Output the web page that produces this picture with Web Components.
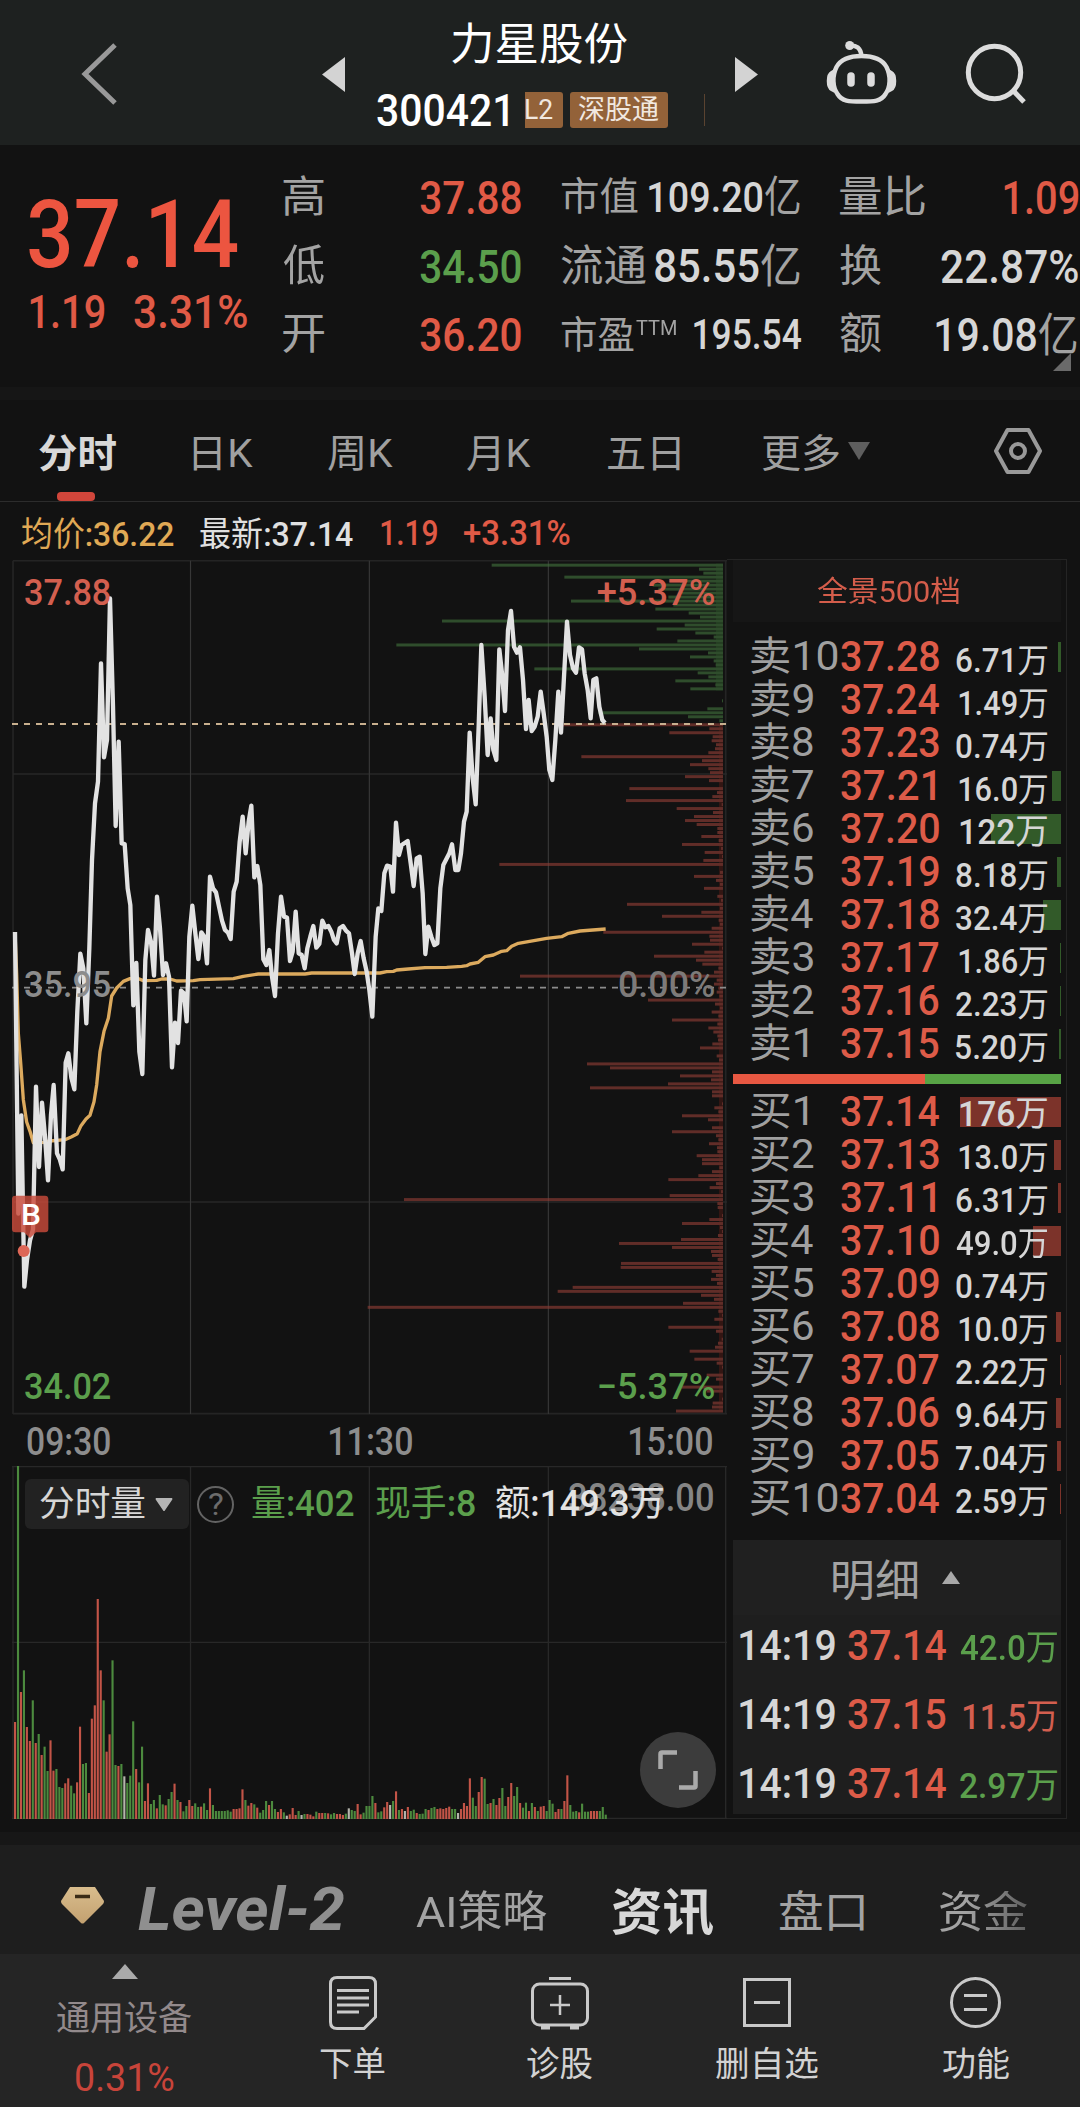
<!DOCTYPE html>
<html lang="zh-CN">
<head>
<meta charset="utf-8">
<title>力星股份 300421</title>
<style>
  body {
    margin: 0;
    width: 1080px;
    height: 2107px;
    overflow: hidden;
    background: #121212;
    color: #d6d6d6;
    font-family: Roboto, "Noto Sans CJK SC", sans-serif;
    --red: #e05a46;
    --green: #5b9f4c;
    --grey: #a3a3a3;
  }
</style>
</head>
<body>
<stock-page></stock-page>

<script>
// text squeezed or stretched to an exact drawn width: <fit-text w="98" s="41" x="10">
// w = drawn width, s = font size, x = space before it
const ruler = document.createElement('canvas').getContext('2d');

class FitText extends HTMLElement {
  constructor() {
    super();
    this.attachShadow({ mode: 'open' });
  }

  connectedCallback() {
    const size = this.getAttribute('s') || 34;
    const width = Number(this.getAttribute('w'));
    this.shadowRoot.innerHTML = `
      <style>
        :host {
          display: block;
          flex: none;
          width: ${width}px;
          height: ${size}px;
          margin-left: ${this.getAttribute('x') || 0}px;
          font-size: ${size}px;
          line-height: ${size}px;
          white-space: nowrap;
        }
        div {
          width: max-content;
          transform-origin: 0 50%;
        }
      </style>
      <div><slot></slot></div>
    `;
    const cs = getComputedStyle(this);
    // medium digits sit next to regular hanzi
    const runs = this.textContent.match(/[\u4e00-\u9fff]+|[^\u4e00-\u9fff]+/g);
    const weightOf = (run) => (cs.fontWeight === '500' && run >= '\u4e00' ? '400' : cs.fontWeight);
    const sizes = runs.map((run) => {
      ruler.font = `${cs.fontStyle} ${weightOf(run)} ${size}px ${cs.fontFamily}`;
      return ruler.measureText(run);
    });
    if (cs.fontWeight === '500') {
      this.innerHTML = runs.map((run) => (weightOf(run) === '400' ? `<span style="font-weight:400">${run}</span>` : run)).join('');
    }
    const last = sizes.pop();
    const left = (sizes[0] || last).actualBoundingBoxLeft;
    const ink = sizes.reduce((sum, m) => sum + m.width, left + last.actualBoundingBoxRight);
    const k = width / ink;
    this.shadowRoot.querySelector('div').style.transform = `translateX(${left * k}px) scaleX(${k})`;
  }
}

class StockHeader extends HTMLElement {
  constructor() {
    super();
    this.attachShadow({ mode: 'open' });
  }

  connectedCallback() {
    this.shadowRoot.innerHTML = `
      <style>
        :host {
          display: flex;
          align-items: center;
          height: 145px;
          background: #1e2120;
          color: #fff;
        }
        svg { flex: none; display: block; overflow: visible; }
        .back { margin: 3px 206px 0 82px; }
        .tri { margin-top: 3px; }
        .center { width: 390px; height: 145px; }
        .name { display: flex; height: 44px; padding-top: 23px; }
        .code { display: flex; align-items: center; height: 36px; margin-top: 25px; font-weight: 500; }
        .num { margin-top: 2px; }
        .tag {
          display: flex;
          align-items: center;
          height: 36px;
          background: #936239;
          border-radius: 3px;
          color: #f1e8e0;
          font-weight: 400;
        }
        .tag fit-text { margin-top: 1px; }
        .l2 { width: 38px; margin-left: 17px; border-radius: 0 3px 3px 0; }
        .connect { width: 98px; margin-left: 7px; }
        .line { width: 1px; height: 32px; margin-left: 36px; background: #5a4330; }
        .bot { margin: 0 0 0 68px; }
        .search { margin: 2px 0 0 70px; }
      </style>
      <svg class="back" width="34" height="62"><path d="M33 2L3 31L33 60" fill="none" stroke="#999" stroke-width="5"/></svg>
      <svg class="tri" width="23" height="35"><path d="M23 0V35L0 17.5Z" fill="#d3d3d3"/></svg>
      <div class="center">
        <div class="name"><fit-text x="107" w="175" s="44">力星股份</fit-text></div>
        <div class="code">
          <fit-text class="num" x="32" w="131" s="44">300421</fit-text>
          <div class="tag l2"><fit-text x="1" w="27" s="27">L2</fit-text></div>
          <div class="tag connect"><fit-text x="9" w="80" s="27">深股通</fit-text></div>
          <div class="line"></div>
        </div>
      </div>
      <svg class="tri" width="23" height="35"><path d="M0 0V35L23 17.5Z" fill="#d3d3d3"/></svg>
      <svg class="bot" width="70" height="64" fill="none" stroke="#dcdcdc" stroke-width="4.5">
        <path d="M35.5 15C47 15 56 18 60.500 26C65 35 64.500 46 59.500 53C55 60.500 48 60.500 35.500 60.500C23 60.500 16 60.500 11.500 53C6.500 46 6 35 10.500 26C15 18 24 15 35.500 15Z"/>
        <path d="M24 4.500C30 4 35 7 35.300 15"/>
        <circle cx="23.700" cy="4.500" r="4.500" fill="#dcdcdc" stroke="none"/>
        <path d="M6 32C2 34 2 46 6 48Z M65 32C69 34 69 46 65 48Z" fill="#dcdcdc"/>
        <path d="M25 35V42M45 35V42" stroke-width="7.500" stroke-linecap="round"/>
      </svg>
      <svg class="search" width="60" height="60" fill="none" stroke="#dcdcdc" stroke-width="5">
        <circle cx="28.500" cy="28.500" r="26.200"/>
        <path d="M47.500 47L58 58"/>
      </svg>
    `;
  }
}

class QuotePanel extends HTMLElement {
  constructor() {
    super();
    this.attachShadow({ mode: 'open' });
  }

  connectedCallback() {
    this.shadowRoot.innerHTML = `
      <style>
        :host {
          display: grid;
          grid-template-columns: 283px 278px 279px 240px;
          height: 242px;
          position: relative;
          overflow: hidden;
          font-weight: 500;
        }
        .col { padding-top: 18.5px; }
        .row { display: flex; align-items: center; height: 68.5px; }
        .row :first-child { color: var(--grey); font-weight: 400; }
        .red { color: var(--red); }
        .green { color: var(--green); }
        .big { display: flex; height: 94px; padding-top: 42.5px; color: #ec5540; }
        .chg { display: flex; padding-top: 8px; height: 47px; align-items: center; color: var(--red); margin-top: -1.5px; }
        .ttm { position: relative; top: -7px; color: var(--grey); font-weight: 400; }
        .corner { position: absolute; right: 9px; bottom: 16px; }
      </style>
      <div>
        <div class="big"><fit-text x="29" w="209" s="94">37.14</fit-text></div>
        <div class="chg"><fit-text x="30" w="74" s="47">1.19</fit-text><fit-text x="30" w="113" s="47">3.31%</fit-text></div>
      </div>
      <div class="col">
        <div class="row"><fit-text w="41" s="43">高</fit-text><fit-text class="red" x="96" w="101" s="47">37.88</fit-text></div>
        <div class="row"><fit-text w="41" s="43">低</fit-text><fit-text class="green" x="96" w="101" s="47">34.50</fit-text></div>
        <div class="row"><fit-text w="41" s="43">开</fit-text><fit-text class="red" x="96" w="101" s="47">36.20</fit-text></div>
      </div>
      <div class="col">
        <div class="row"><fit-text w="77" s="39">市值</fit-text><fit-text x="11" w="151" s="43">109.20亿</fit-text></div>
        <div class="row"><fit-text w="85" s="43">流通</fit-text><fit-text x="9" w="145" s="46">85.55亿</fit-text></div>
        <div class="row"><fit-text w="73" s="38">市盈</fit-text><fit-text class="ttm" x="2" w="40" s="20">TTM</fit-text><fit-text x="18" w="107" s="42">195.54</fit-text></div>
      </div>
      <div class="col">
        <div class="row"><fit-text w="85" s="43">量比</fit-text><fit-text class="red" x="79" w="74" s="47">1.09</fit-text></div>
        <div class="row"><fit-text w="41" s="43">换</fit-text><fit-text x="60" w="137" s="47">22.87%</fit-text></div>
        <div class="row"><fit-text w="41" s="43">额</fit-text><fit-text x="55" w="141" s="46">19.08亿</fit-text></div>
      </div>
      <svg class="corner" width="18" height="18"><path d="M18 0V18H0Z" fill="#6a6a6a"/></svg>
    `;
  }
}

class PeriodTabs extends HTMLElement {
  constructor() {
    super();
    this.attachShadow({ mode: 'open' });
  }

  connectedCallback() {
    this.shadowRoot.innerHTML = `
      <style>
        :host {
          display: block;
          border-top: 13px solid #161616;
          border-bottom: 1px solid #2c2c2c;
        }
        .tabs { display: flex; align-items: center; height: 101px; color: #a0a0a0; }
        .tabs fit-text { margin-top: 8px; }
        .on { color: #d8d8d8; font-weight: 700; }
        .tab { position: relative; display: flex; height: 101px; align-items: center; }
        .bar { position: absolute; left: 57px; bottom: 0; width: 38px; height: 9px; border-radius: 4px; background: #d1463b; }
        svg { flex: none; }
      </style>
      <div class="tabs">
        <div class="tab"><fit-text class="on" x="39" w="77" s="39">分时</fit-text><div class="bar"></div></div>
        <fit-text x="77" w="60" s="39">日K</fit-text>
        <fit-text x="75" w="65" s="39">周K</fit-text>
        <fit-text x="74" w="64" s="39">月K</fit-text>
        <fit-text x="77" w="72" s="39">五日</fit-text>
        <fit-text x="82" w="77" s="39">更多</fit-text>
        <svg style="margin-left:9px" width="22" height="18"><path d="M0 0H22L11 18Z" fill="#5e5e5e"/></svg>
        <svg style="margin-left:124px" width="48" height="46" fill="none" stroke="#999" stroke-width="4">
          <path d="M13.500 2H34.500L46 23L34.500 44H13.500L2 23Z" stroke-linejoin="round"/>
          <circle cx="24" cy="23" r="7"/>
        </svg>
      </div>
    `;
  }
}

// minute line; three units per pixel, as are all the chart numbers below
const PRICE = `45,1176 55,2021 64,1726 73,2240 81,2160 90,2101 99,2068 108,1640 117,1881 126,1688 135,1790 144,1921 153,1724 161,1635 171,1840 179,1857 188,1888
  197,1568 205,1540 214,1613 223,1648 232,1413 241,1241 250,1285 259,1450 268,1224 276,960 285,790 294,725 303,370 312,652 321,600 330,175 339,500
  347,858 356,605 365,910 374,912 383,1045 391,1095 400,1396 409,1269 418,1535 427,1602 436,1260 444,1170 453,1205 462,1307 471,1070 480,1165
  489,1305 498,1270 507,1310 516,1582 525,1448 534,1509 543,1352 552,1360 560,1444 568,1190 577,1097 586,1180 595,1257 604,1177 613,1190
  621,1270 630,1010 639,1045 648,1057 657,1100 666,1142 675,1170 684,1178 692,1197 701,1055 710,1025 719,905 728,830 737,940 746,845 754,797
  763,1012 772,978 781,1035 790,1258 799,1275 808,1230 816,1310 825,1368 834,1180 843,1070 852,1130 861,1133 870,1263 878,1235 887,1115
  896,1240 905,1245 914,1285 922,1225 931,1190 940,1158 949,1223 958,1212 967,1142 976,1162 985,1158 994,1175 1002,1200 1010,1210 1019,1165
  1029,1158 1038,1172 1047,1180 1056,1240 1064,1302 1073,1240 1082,1203 1091,1255 1100,1295 1108,1350 1117,1430 1127,1190 1135,1105 1144,1113
  1153,1000 1161,977 1171,980 1179,1055 1188,848 1197,945 1205,915 1223,903 1232,970 1241,1038 1250,955 1259,950 1268,1060 1276,1242 1285,1160
  1294,1190 1303,1215 1312,1210 1321,1045 1330,975 1348,940 1356,913 1366,990 1375,990 1383,940 1392,845 1400,815 1409,578 1418,715 1427,793
  1436,560 1444,315 1454,470 1463,645 1472,535 1480,630 1489,660 1498,328 1506,400 1515,513 1524,270 1533,213 1542,320 1551,338 1560,322
  1569,420 1578,567 1586,480 1595,573 1604,560 1613,530 1622,455 1631,520 1640,590 1648,690 1657,720 1666,600 1675,455 1683,578 1692,410
  1701,245 1710,345 1719,385 1728,398 1737,322 1746,328 1754,400 1763,450 1772,535 1780,420 1789,415 1798,500 1807,540 1815,549`;

const AVERAGE = `45,1176 50,1302 55,1480 62,1568 70,1679 80,1746 90,1774 100,1808 130,1807 150,1803 195,1799 215,1790 232,1781 243,1757 258,1737 270,1726
  282,1685 290,1635 300,1535 312,1474 325,1435 335,1368 350,1344 370,1324 390,1316 410,1314 430,1322 470,1321 485,1317 510,1317 530,1323
  580,1322 600,1319 700,1316 730,1309 775,1302 915,1302 935,1299 1140,1299 1160,1295 1180,1294 1190,1290 1225,1287 1275,1283 1340,1282
  1385,1279 1400,1277 1410,1272 1435,1267 1455,1250 1480,1245 1505,1234 1520,1232 1535,1219 1555,1210 1640,1195 1685,1190 1705,1180 1740,1173 1817,1167`;

// order depth at each price step, top to bottom; the first 40 are asks
const DEPTH = [694,72,59,476,129,211,194,124,164,456,149,203,103,69,843,115,199,83,28,137,980,252,45,99,28,22,566,76,44,143,23,98,0,0,3,0,47,374,105,11,
  479,41,161,31,34,21,24,44,425,63,99,44,39,114,42,0,281,18,32,291,4,139,30,87,114,79,17,17,65,13,123,6,55,3,59,671,0,9,87,21,9,57,0,17,6,288,9,65,183,13,9,34,
  359,41,39,93,3,56,207,81,62,14,27,609,19,27,14,19,11,225,24,9,34,14,153,17,44,29,17,15,32,69,0,19,12,408,339,33,129,36,165,399,33,33,0,3,26,14,123,45,0,33,
  153,21,14,42,18,17,79,63,63,11,33,74,164,21,40,6,160,957,17,16,0,3,41,123,9,3,15,126,312,153,36,33,16,306,307,34,21,36,18,451,496,66,27,120,1066,14,3,26,0,
  164,21,0,4,15,24,100,0,86,19,3,0,49,21,0,124,49,0,3,31,33,141];

// volume per minute: r up, g down, w flat
const VOLUME = `r291 g1059 r381 g446 r276 r234 g356 r228 g255 r192 g217 g144 r236 r145 g150 g96 g93 r107 r122 g100 g77 r110 r277 g165 g168 r78 r301 r341 r660 r446
  g356 r202 r254 g476 g162 r159 g165 w128 g108 g130 g293 r150 g110 g217 r54 r107 g45 g57 r32 g72 g44 r41 g60 g81 r106 g57 r51 g23 g39 r57
  r39 g47 g36 r37 g47 g27 r92 g42 g24 g24 g24 g24 g26 g22 r30 r30 r32 r89 g57 r40 r48 g44 r34 g19 g27 g54 r42 g54 g30 r21
  r30 g20 w10 r14 r33 r12 g24 w12 g15 r15 r13 r8 g22 r18 r18 g18 r17 g14 g18 r15 r15 r12 g16 w32 g27 g24 r45 r14 g19 g39
  g39 g69 r48 g20 g23 r35 r51 w42 g54 r83 g27 r30 w24 r36 g24 g28 r18 g15 g16 g30 r27 g33 g36 r30 r32 r30 r33 r37 g30 g30
  w18 r30 r48 r39 r122 g64 g39 r81 r126 g121 g45 r48 g60 r42 r63 g93 g39 r66 r108 g69 g96 r48 g34 g49 r24 g48 r36 g24 r37 r39
  g24 g57 g46 r21 r30 g30 r54 r131 g42 g22 g24 r20 g46 g22 g22 r24 r24 r24 g24 g36 g13`.trim().split(/\s+/);

class MinuteChart extends HTMLElement {
  constructor() {
    super();
    this.attachShadow({ mode: 'open' });
  }

  connectedCallback() {
    const depth = DEPTH.map((len, i) => len
      ? `<rect x="${2169 - len}" y="${71 + i * 11.97}" width="${len}" height="9" fill="${i < 40 ? '#2f4d2c' : '#612d28'}"/>`
      : '').join('');
    this.shadowRoot.innerHTML = `
      <style>
        :host { display: block; width: 727px; }
        .info { display: flex; align-items: center; height: 58px; padding-top: 5px; box-sizing: border-box; font-weight: 500; }
        .red { color: var(--red); }
        svg { display: block; }
        .times { display: flex; align-items: center; height: 51px; padding-top: 3px; box-sizing: border-box; color: #8d8d8d; font-weight: 500; }
        text { font: 500 110px Roboto, sans-serif; }
      </style>
      <div class="info">
        <fit-text x="22" w="152" s="34" style="color:#e0a955">均价:36.22</fit-text>
        <fit-text x="26" w="153" s="34" style="color:#e0e0e0">最新:37.14</fit-text>
        <fit-text class="red" x="28" w="56" s="35">1.19</fit-text>
        <fit-text class="red" x="27" w="106" s="35">+3.31%</fit-text>
      </div>
      <svg width="727" height="855" viewBox="0 60 2181 2565">
        <g stroke="#242424" stroke-width="5" fill="none">
          <path d="M39 62V2622M39 62H2181M39 2621H2181M2177 62V2622"/>
          <path d="M39 702H2181M39 1986H2181M571.500 62V2622M1108 62V2622M1645 62V2622" stroke-width="4" stroke="#272727"/>
        </g>
        <rect x="2148" y="71" width="21" height="380" fill="#1d331b"/>
        <rect x="2157" y="552" width="12" height="2060" fill="#331613"/>
        ${depth}
        <path d="M571.500 62V2622M1108 62V2622M1645 62V2622" stroke="#fff" stroke-opacity=".08" stroke-width="3"/>
        <path d="M36 1343H2181" stroke="#8c8c8c" stroke-width="5" stroke-dasharray="18 18"/>
        <path d="M36 552H2181" stroke="#c9b08f" stroke-width="6" stroke-dasharray="18 18"/>
        <g fill="none" stroke-linejoin="round">
          <polyline points="${AVERAGE}" stroke="#dcaa5e" stroke-width="10"/>
          <polyline points="${PRICE}" stroke="#e2e2e2" stroke-width="13"/>
        </g>
        <path d="M46 1967H135Q145 1967 145 1977V2067Q145 2077 135 2077H108L90 2094L72 2077H46Q36 2077 36 2067V1977Q36 1967 46 1967Z" fill="#c94a3b" fill-opacity=".82"/>
        <text x="63" y="2054" textLength="60" lengthAdjust="spacingAndGlyphs" fill="#fff" style="font-size:90px">B</text>
        <circle cx="71" cy="2133" r="18" fill="#dd6656"/>
        <text x="72" y="194" textLength="262" lengthAdjust="spacingAndGlyphs" fill="#d35f4f">37.88</text>
        <text x="72" y="1370" textLength="262" lengthAdjust="spacingAndGlyphs" fill="#8c8c8c">35.95</text>
        <text x="72" y="2576" textLength="262" lengthAdjust="spacingAndGlyphs" fill="#5b9f4c">34.02</text>
        <text x="1790" y="194" textLength="356" lengthAdjust="spacingAndGlyphs" fill="#d35f4f">+5.37%</text>
        <text x="1854" y="1370" textLength="292" lengthAdjust="spacingAndGlyphs" fill="#7d7a79">0.00%</text>
        <text x="1790" y="2576" textLength="356" lengthAdjust="spacingAndGlyphs" fill="#5b9f4c">−5.37%</text>
      </svg>
      <div class="times">
        <fit-text x="27" w="83" s="38">09:30</fit-text>
        <fit-text x="220" w="82" s="38">11:30</fit-text>
        <fit-text x="218" w="82" s="38">15:00</fit-text>
      </div>
    `;
  }
}

class VolumeChart extends HTMLElement {
  constructor() {
    super();
    this.attachShadow({ mode: 'open' });
  }

  connectedCallback() {
    const fills = { r: '#c25447', g: '#4c8a3e', w: '#b5b5ac' };
    const bars = VOLUME.map((v, i) => {
      const h = Number(v.slice(1));
      return `<rect x="${42 + i * 8.86}" y="${1107 - h}" width="6.400" height="${h}" fill="${fills[v[0]]}"/>`;
    }).join('');
    this.shadowRoot.innerHTML = `
      <style>
        :host { display: grid; width: 727px; height: 354px; position: relative; }
        svg { display: block; }
        .plot, .head, .max { grid-area: 1 / 1; }
        .head { display: flex; align-items: center; height: 50px; margin-top: 13px; z-index: 1; font-weight: 500; }
        .pick {
          display: flex;
          align-items: center;
          width: 164px;
          height: 50px;
          margin-left: 25px;
          background: #222;
          border-radius: 6px;
          color: #d6d6d6;
          font-weight: 400;
        }
        .help {
          display: flex;
          align-items: center;
          justify-content: center;
          width: 33px;
          height: 33px;
          margin-left: 8px;
          border: 2.5px solid #636363;
          border-radius: 50%;
          color: #6c6c6c;
          font-weight: 400;
        }
        .green { color: var(--green); }
        .max { display: flex; height: 38px; margin: 13px 0 0 569px; color: #858585; font-weight: 500; }
        .expand { position: absolute; left: 640px; top: 266px; }
      </style>
      <svg class="plot" width="727" height="354" viewBox="0 48 2181 1062">
        <path d="M39 50V1107M36 50H2181M2177 50V1107M36 577H2181M36 1105H2181M571.500 50V1107M1108 50V1107M1645 50V1107" stroke="#282828" stroke-width="4" fill="none"/>
        ${bars}
      </svg>
      <div class="max"><fit-text w="144" s="38">38238.00</fit-text></div>
      <div class="head">
        <div class="pick">
          <fit-text x="15" w="105" s="35">分时量</fit-text>
          <svg style="margin-left:10px" width="18" height="13"><path d="M1 0H17Q18 1 17 2L9.500 13H8.500L1 2Q0 1 1 0Z" fill="#b5b5b5"/></svg>
        </div>
        <div class="help"><fit-text w="14" s="31">?</fit-text></div>
        <fit-text class="green" x="18" w="102" s="36">量:402</fit-text>
        <fit-text class="green" x="22" w="99" s="36">现手:8</fit-text>
        <fit-text x="21" w="167" s="36" style="color:#e3e3e3">额:149.3万</fit-text>
      </div>
      <svg class="expand" width="76" height="76" fill="none">
        <circle cx="38" cy="38" r="38" fill="#3c3c3c"/>
        <path d="M37 20.500H22Q20.500 20.500 20.500 22V37M55.500 39V54Q55.500 55.500 54 55.500H39" stroke="#aaa" stroke-width="4.500"/>
      </svg>
    `;
  }
}

// one price level of the order book
class BookRow extends HTMLElement {
  constructor() {
    super();
    this.attachShadow({ mode: 'open' });
  }

  connectedCallback() {
    const name = this.getAttribute('name');
    const vol = this.getAttribute('vol');
    const ask = name[0] === '卖';
    const ten = name.length > 2;
    const one = name.endsWith('1');
    const labelWidth = ten ? 87 : one ? 57 : 62;
    const whole = !vol.includes('.');
    const narrow = vol[0] === '1' ? 3 : 0;
    const volX = 17 + (whole ? 4 : narrow);
    const priceWidth = this.getAttribute('price').endsWith('1') ? 94 : 98;
    this.shadowRoot.innerHTML = `
      <style>
        :host { display: grid; height: 43px; font-weight: 500; }
        .bar, .row { grid-area: 1 / 1; }
        .bar {
          justify-self: end;
          align-self: center;
          width: ${this.getAttribute('bar')}px;
          height: 30px;
          background: ${ask ? '#325a29' : '#7c332a'};
        }
        .row { display: flex; align-items: center; }
        .name { color: #a0a0a0; font-weight: 400; }
        .price { color: #dd5b48; }
        .vol { margin-top: ${ask ? 7 : 5}px; }
      </style>
      <div class="bar"></div>
      <div class="row">
        <fit-text class="name" x="18" w="${labelWidth}" s="40">${name}</fit-text>
        <fit-text class="price" x="${90 - labelWidth}" w="${priceWidth}" s="42">${this.getAttribute('price')}</fit-text>
        <fit-text class="vol" x="${volX + 98 - priceWidth}" w="${108 - volX}" s="${whole ? 35 : 33}">${vol}</fit-text>
      </div>
    `;
  }
}

const ASKS = [
  ['卖10', '37.28', '6.71万', 3], ['卖9', '37.24', '1.49万', 0], ['卖8', '37.23', '0.74万', 0], ['卖7', '37.21', '16.0万', 9], ['卖6', '37.20', '122万', 70],
  ['卖5', '37.19', '8.18万', 4], ['卖4', '37.18', '32.4万', 18], ['卖3', '37.17', '1.86万', 1], ['卖2', '37.16', '2.23万', 1], ['卖1', '37.15', '5.20万', 2],
];
const BIDS = [
  ['买1', '37.14', '176万', 101], ['买2', '37.13', '13.0万', 7], ['买3', '37.11', '6.31万', 3], ['买4', '37.10', '49.0万', 28], ['买5', '37.09', '0.74万', 0],
  ['买6', '37.08', '10.0万', 5], ['买7', '37.07', '2.22万', 1], ['买8', '37.06', '9.64万', 5], ['买9', '37.05', '7.04万', 4], ['买10', '37.04', '2.59万', 1],
];

class OrderBook extends HTMLElement {
  constructor() {
    super();
    this.attachShadow({ mode: 'open' });
  }

  connectedCallback() {
    const row = ([name, price, vol, bar]) => `<book-row name="${name}" price="${price}" vol="${vol}" bar="${bar}"></book-row>`;
    const trade = (price, vol, color, w) => `
      <div class="trade">
        <fit-text x="7" w="95" s="42">14:19</fit-text>
        <fit-text class="price" x="13" w="98" s="42">${price}</fit-text>
        <fit-text class="vol" style="color:${color}" x="${111 - w}" w="${w}" s="35">${vol}</fit-text>
      </div>`;
    this.shadowRoot.innerHTML = `
      <style>
        :host {
          display: block;
          width: 328px;
          height: 1258px;
          margin-top: 57px;
          padding: 0 5px 0 6px;
          border-top: 1px solid #242424;
          border-right: 1px solid #242424;
          border-bottom: 1px solid #242424;
        }
        .all { display: flex; align-items: center; height: 62px; padding-top: 2px; box-sizing: border-box; background: #161616; color: #d45d4b; margin-bottom: 13px; }
        .ratio { display: flex; height: 10px; margin: 9px 0 6px; background: #57a345; }
        .ratio div { width: 191.5px; background: #e85842; }
        .detail { display: flex; align-items: center; height: 75px; margin-top: 19px; background: #202020; color: #a3a3a3; }
        .detail fit-text { margin-top: 8px; }
        .trades { background: #1e1e1e; height: 199px; padding-top: 1px; box-sizing: border-box; }
        .bids book-row { height: 43.1px; }
        .trade { display: flex; align-items: center; height: 68.9px; font-weight: 500; margin-top: -4px; margin-bottom: 4px; }
        .price { color: #dd5b48; }
        .vol { margin-top: 5px; }
      </style>
      <div class="all"><fit-text x="84" w="142" s="29">全景500档</fit-text></div>
      ${ASKS.map(row).join('')}
      <div class="ratio"><div></div></div>
      <div class="bids">${BIDS.map(row).join('')}</div>
      <div class="detail">
        <fit-text x="100" w="84" s="43">明细</fit-text>
        <svg style="margin:0 0 0 25px" width="18" height="13"><path d="M9 0L18 13H0Z" fill="#a8a8a8"/></svg>
      </div>
      <div class="trades">
        ${trade('37.14', '42.0万', '#5b9f4c', 97)}
        ${trade('37.15', '11.5万', '#d35f4f', 94)}
        ${trade('37.14', '2.97万', '#5b9f4c', 97)}
      </div>
    `;
  }
}

class InfoTabs extends HTMLElement {
  constructor() {
    super();
    this.attachShadow({ mode: 'open' });
  }

  connectedCallback() {
    this.shadowRoot.innerHTML = `
      <style>
        :host {
          display: flex;
          align-items: center;
          height: 109px;
          padding-top: 26px;
          box-sizing: border-box;
          background: #1e1e1e;
          color: #a3a3a3;
        }
        svg { flex: none; margin: -15px 0 0 61px; }
        .logo { color: #8f8f8f; font-weight: 700; font-style: italic; margin-top: -7px; }
        .on { color: #d8d8d8; font-weight: 700; }
        .fade { -webkit-mask-image: linear-gradient(90deg, #000 30%, rgba(0,0,0,.5)); }
      </style>
      <svg width="43" height="38">
        <defs><linearGradient id="gold" x2="0" y2="1"><stop stop-color="#d9bd8d"/><stop offset="1" stop-color="#c3a170"/></linearGradient></defs>
        <path d="M9 1H34L43 15Q43 17 42 18L23 37Q21.500 38 20 37L1 18Q0 17 0 15Z" fill="url(#gold)"/>
        <path d="M14 10.500H29" stroke="#3a2c17" stroke-width="3.500"/>
      </svg>
      <fit-text class="logo" x="34" w="206" s="61">Level-2</fit-text>
      <fit-text x="72" w="131" s="43">AI策略</fit-text>
      <fit-text class="on" x="65" w="101" s="50">资讯</fit-text>
      <fit-text x="66" w="85" s="44">盘口</fit-text>
      <fit-text class="fade" x="76" w="87" s="44">资金</fit-text>
    `;
  }
}

// icon in the default slot, caption in the label attribute
class NavItem extends HTMLElement {
  constructor() {
    super();
    this.attachShadow({ mode: 'open' });
  }

  connectedCallback() {
    this.shadowRoot.innerHTML = `
      <style>
        :host { display: flex; flex-direction: column; align-items: center; color: #d2d2d2; }
        .icon { display: flex; align-items: center; justify-content: center; height: 97px; }
        fit-text { margin-top: -4px; }
      </style>
      <div class="icon"><slot></slot></div>
      <fit-text w="${this.getAttribute('w')}" s="34">${this.getAttribute('label')}</fit-text>
    `;
  }
}

class BottomNav extends HTMLElement {
  constructor() {
    super();
    this.attachShadow({ mode: 'open' });
  }

  connectedCallback() {
    this.shadowRoot.innerHTML = `
      <style>
        :host {
          display: grid;
          grid-template-columns: 249px 207px 207px 208px 209px;
          height: 153px;
          background: #252525;
        }
        svg { display: block; fill: none; stroke: #c9c9c9; stroke-width: 3; overflow: visible; }
        .market { display: flex; flex-direction: column; align-items: center; color: #938a8c; }
        .market svg { margin: 10px 0 22px; }
        .rate { color: #c8443a; margin-top: 24px; }
      </style>
      <div class="market">
        <svg width="26" height="15"><path d="M13 0L26 15H0Z" fill="#aaa" stroke="none"/></svg>
        <fit-text w="135" s="34">通用设备</fit-text>
        <fit-text class="rate" w="98" s="38">0.31%</fit-text>
      </div>
      <nav-item label="下单" w="65">
        <svg width="48" height="54"><path d="M8 1.500H40Q46.500 1.500 46.500 8V41L35 52.500H8Q1.500 52.500 1.500 46V8Q1.500 1.500 8 1.500Z"/><path d="M8 14.500H40M8 22H40M8 29H40M8 36H30"/></svg>
      </nav-item>
      <nav-item label="诊股" w="65">
        <svg width="58" height="52"><path d="M18 1.500H40"/><rect x="1.500" y="7" width="55" height="41" rx="7"/><path d="M10 50.500H19M39 50.500H48" stroke-width="4"/><path d="M29 18V38M19 28H39" stroke-width="2.500"/></svg>
      </nav-item>
      <nav-item label="删自选" w="102">
        <svg width="48" height="49"><path d="M1.500 1.500H46.500V47.500H1.500Z"/><path d="M11 24.500H37"/></svg>
      </nav-item>
      <nav-item label="功能" w="66">
        <svg width="51" height="51"><circle cx="25.500" cy="25.500" r="24"/><path d="M14 18.500H37M14 32.500H37"/></svg>
      </nav-item>
    `;
  }
}

class StockPage extends HTMLElement {
  constructor() {
    super();
    this.attachShadow({ mode: 'open' });
  }

  connectedCallback() {
    this.shadowRoot.innerHTML = `
      <style>
        :host { display: block; }
        .main { display: flex; height: 1330px; border-bottom: 13px solid #171717; }
        .left { flex: none; }
      </style>
      <stock-header></stock-header>
      <quote-panel></quote-panel>
      <period-tabs></period-tabs>
      <div class="main">
        <div class="left">
          <minute-chart></minute-chart>
          <volume-chart></volume-chart>
        </div>
        <order-book></order-book>
      </div>
      <info-tabs></info-tabs>
      <bottom-nav></bottom-nav>
    `;
  }
}

customElements.define('fit-text', FitText);
customElements.define('stock-header', StockHeader);
customElements.define('quote-panel', QuotePanel);
customElements.define('period-tabs', PeriodTabs);
customElements.define('minute-chart', MinuteChart);
customElements.define('volume-chart', VolumeChart);
customElements.define('book-row', BookRow);
customElements.define('order-book', OrderBook);
customElements.define('info-tabs', InfoTabs);
customElements.define('nav-item', NavItem);
customElements.define('bottom-nav', BottomNav);
customElements.define('stock-page', StockPage);
</script>
</body>
</html>
